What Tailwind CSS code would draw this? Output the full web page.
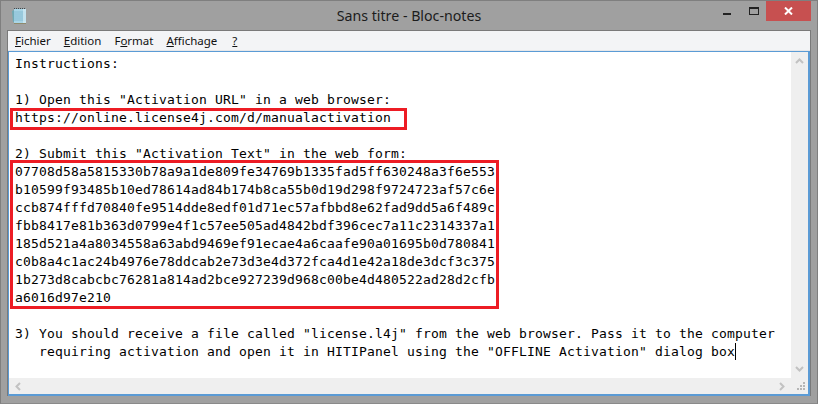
<!DOCTYPE html>
<html lang="fr">
<head>
  <meta charset="UTF-8" />
  <title>Sans titre - Bloc-notes</title>
  <script src="https://cdn.jsdelivr.net/npm/@tailwindcss/browser@4"></script>
</head>
<body class="w-[818px] h-[404px] overflow-hidden bg-[#a0a0a0]">
  <div class="relative flex flex-col h-full border border-[#7f7f7f] border-b-[#8a8a8a]">

    <!-- title bar -->
    <div class="relative flex items-start h-[29px] shrink-0">
      <svg class="ml-[10px] mt-[6px]" width="17" height="18" viewBox="0 0 17 18">
        <path d="M3 3 L1 4 L2 15 L10 16 L4 14Z" fill="#6fa9b4" />
        <rect x="3" y="2" width="12" height="14" fill="#a9d5e6" />
        <path d="M3 5 H15 M3 7 H15 M3 9 H15 M3 11 H15 M3 13 H15" stroke="#86bcd2" stroke-width="1" />
        <rect x="12" y="2" width="3" height="14" fill="#d6edf5" opacity="0.7" />
        <rect x="3" y="16" width="12" height="1" fill="#8f8a6c" />
        <path d="M3 1.5 H15" stroke="#3d4a50" stroke-width="1" stroke-dasharray="1 1" />
      </svg>
      <div class="absolute left-0 right-0 top-[6px] text-center text-[14.2px] leading-[18px] text-[#1c1c1c] font-['Noto_Sans',sans-serif]">Sans titre - Bloc-notes</div>
      <div class="ml-auto flex items-start">
        <div class="mt-[12px] w-[8px] h-[2px] bg-[#222]"></div>
        <div class="ml-[18px] mt-[6px] w-[10px] h-[8px] border border-t-2 border-[#222]"></div>
        <div class="ml-[7px] flex items-center justify-center w-[45px] h-[20px] bg-[#c75050]">
          <svg width="9" height="8" viewBox="0 0 9 8">
            <path d="M1 0.5 L8 7.5 M8 0.5 L1 7.5" stroke="#fff" stroke-width="2" />
          </svg>
        </div>
        <div class="w-[6px]"></div>
      </div>
    </div>

    <!-- client area -->
    <div class="flex flex-col flex-1 ml-[6px] mr-[6px] mb-[7px] border-t border-l border-r border-[#7a7a7a] bg-[#f3f4f6]">
      <div class="flex h-[19px] shrink-0 items-center pl-[7px] gap-[13px] text-[11.5px] text-[#111] font-['Noto_Sans',sans-serif]">
        <span><u>F</u>ichier</span>
        <span><u>E</u>dition</span>
        <span>F<u>o</u>rmat</span>
        <span><u>A</u>ffichage</span>
        <span class="ml-[2px]"><u>?</u></span>
      </div>
      <div class="h-px bg-[#e6e7e9]"></div>

      <!-- edit control -->
      <div class="flex-1 flex flex-col min-h-0 border border-[#5b9bd5] border-b-2 border-r-2 bg-white">
        <div class="flex flex-1 min-h-0">
          <pre class="flex-1 pl-[6px] pt-[3px] text-[13px] tracking-[0.174px] leading-[18px] text-black font-['DejaVu_Sans_Mono',monospace] overflow-hidden">Instructions:

1) Open this "Activation URL" in a web browser:
https://online.license4j.com/d/manualactivation

2) Submit this "Activation Text" in the web form:
07708d58a5815330b78a9a1de809fe34769b1335fad5ff630248a3f6e553
b10599f93485b10ed78614ad84b174b8ca55b0d19d298f9724723af57c6e
ccb874fffd70840fe9514dde8edf01d71ec57afbbd8e62fad9dd5a6f489c
fbb8417e81b363d0799e4f1c57ee505ad4842bdf396cec7a11c2314337a1
185d521a4a8034558a63abd9469ef91ecae4a6caafe90a01695b0d780841
c0b8a4c1ac24b4976e78ddcab2e73d3e4d372fca4d1e42a18de3dcf3c375
1b273d8cabcbc76281a814ad2bce927239d968c00be4d480522ad28d2cfb
a6016d97e210

3) You should receive a file called "license.l4j" from the web browser. Pass it to the computer
   requiring activation and open it in HITIPanel using the "OFFLINE Activation" dialog box<span class="inline-block w-px h-[17px] -mb-[4px] bg-black"></span></pre>
          <!-- vertical scrollbar -->
          <div class="flex flex-col justify-between w-[17px] bg-[#efefef] py-[6px] items-center">
            <svg width="9" height="6" viewBox="0 0 9 6"><path d="M1 5 L4.5 1.5 L8 5" fill="none" stroke="#c2c2c2" stroke-width="2" /></svg>
            <svg width="9" height="6" viewBox="0 0 9 6"><path d="M1 1 L4.5 4.5 L8 1" fill="none" stroke="#c2c2c2" stroke-width="2" /></svg>
          </div>
        </div>
        <!-- horizontal scrollbar -->
        <div class="flex items-center justify-between h-[16px] shrink-0 bg-[#efefef] pl-[6px] pr-[3px]">
          <svg width="6" height="9" viewBox="0 0 6 9"><path d="M5 1 L1.5 4.5 L5 8" fill="none" stroke="#c2c2c2" stroke-width="2" /></svg>
          <div class="flex items-center gap-[12px]">
            <svg width="6" height="9" viewBox="0 0 6 9"><path d="M1 1 L4.5 4.5 L1 8" fill="none" stroke="#c2c2c2" stroke-width="2" /></svg>
            <svg width="8" height="8" viewBox="0 0 8 8"><path d="M6 0h2v2H6z M3 3h2v2H3z M6 3h2v2H6z M0 6h2v2H0z M3 6h2v2H3z M6 6h2v2H6z" fill="#b5b5b5" /></svg>
          </div>
        </div>
      </div>
    </div>

    <!-- red highlight boxes drawn over the screenshot -->
    <div class="absolute left-[9px] top-[107px] w-[397px] h-[22px] border-[3px] border-[#ed1c24]"></div>
    <div class="absolute left-[9px] top-[159px] w-[489px] h-[149px] border-[3px] border-[#ed1c24]"></div>
  </div>
</body>
</html>
